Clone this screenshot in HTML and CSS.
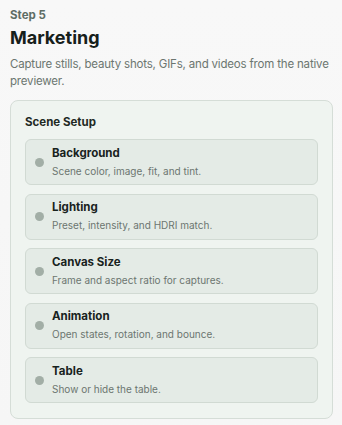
FILE: index.html
```html
<!DOCTYPE html>
<html lang="en">
<head>
  <meta charset="UTF-8">
  <meta name="viewport" content="width=device-width, initial-scale=1.0">
  <title>Marketing</title>
  <link rel="stylesheet" href="styles.css">
</head>
<body>
  <div class="page">
    <div class="step">Step 5</div>
    <h1>Marketing</h1>
    <p class="intro">Capture stills, beauty shots, GIFs, and videos from the native previewer.</p>

    <div class="panel">
      <h2>Scene Setup</h2>
      <div class="list">
        <div class="item">
          <span class="dot"></span>
          <div class="item-text">
            <div class="item-title">Background</div>
            <div class="item-desc">Scene color, image, fit, and tint.</div>
          </div>
        </div>
        <div class="item">
          <span class="dot"></span>
          <div class="item-text">
            <div class="item-title">Lighting</div>
            <div class="item-desc">Preset, intensity, and HDRI match.</div>
          </div>
        </div>
        <div class="item">
          <span class="dot"></span>
          <div class="item-text">
            <div class="item-title">Canvas Size</div>
            <div class="item-desc">Frame and aspect ratio for captures.</div>
          </div>
        </div>
        <div class="item">
          <span class="dot"></span>
          <div class="item-text">
            <div class="item-title">Animation</div>
            <div class="item-desc">Open states, rotation, and bounce.</div>
          </div>
        </div>
        <div class="item">
          <span class="dot"></span>
          <div class="item-text">
            <div class="item-title">Table</div>
            <div class="item-desc">Show or hide the table.</div>
          </div>
        </div>
      </div>
    </div>
  </div>
</body>
</html>
```

FILE: styles.css
```css
body {
  margin: 0;
  padding: 0;
  background: linear-gradient(180deg, #f8f8f8 0%, #f6f6f6 100%);
  font-family: Inter, "Noto Sans", sans-serif;
  color: #1b2520;
}

.page {
  padding: 8px 9px 8px 10px;
}

.step {
  font-size: 11.5px;
  font-weight: 700;
  color: #5e6d65;
  line-height: 14px;
}

h1 {
  font-size: 18px;
  font-weight: 700;
  margin: 5px 0 0;
  line-height: 22px;
  color: #16201b;
}

.intro {
  font-size: 11.5px;
  line-height: 17px;
  letter-spacing: -0.18px;
  color: #6c7670;
  margin: 7px 0 0;
}

.panel {
  margin-top: 10px;
  background: #eff4f0;
  border: 1px solid #d5ddd7;
  border-radius: 8px;
  padding: 13px 14px 15px 14px;
}

h2 {
  font-size: 11.5px;
  font-weight: 700;
  margin: 0 0 9px;
  line-height: 16px;
  color: #1f2a24;
}

.list {
  display: flex;
  flex-direction: column;
  gap: 8.5px;
}

.item {
  display: flex;
  align-items: center;
  gap: 8px;
  background: #e4ebe6;
  border: 1px solid #d1dad3;
  border-radius: 6px;
  padding: 7px 9px;
  height: 30px;
}

.dot {
  width: 9px;
  height: 9px;
  border-radius: 50%;
  background: #a2aea6;
  flex-shrink: 0;
}

.item-title {
  font-size: 11.5px;
  font-weight: 700;
  line-height: 15px;
  color: #18221d;
}

.item-desc {
  font-size: 10px;
  line-height: 15px;
  margin-top: 3px;
  color: #6c7670;
}
```
